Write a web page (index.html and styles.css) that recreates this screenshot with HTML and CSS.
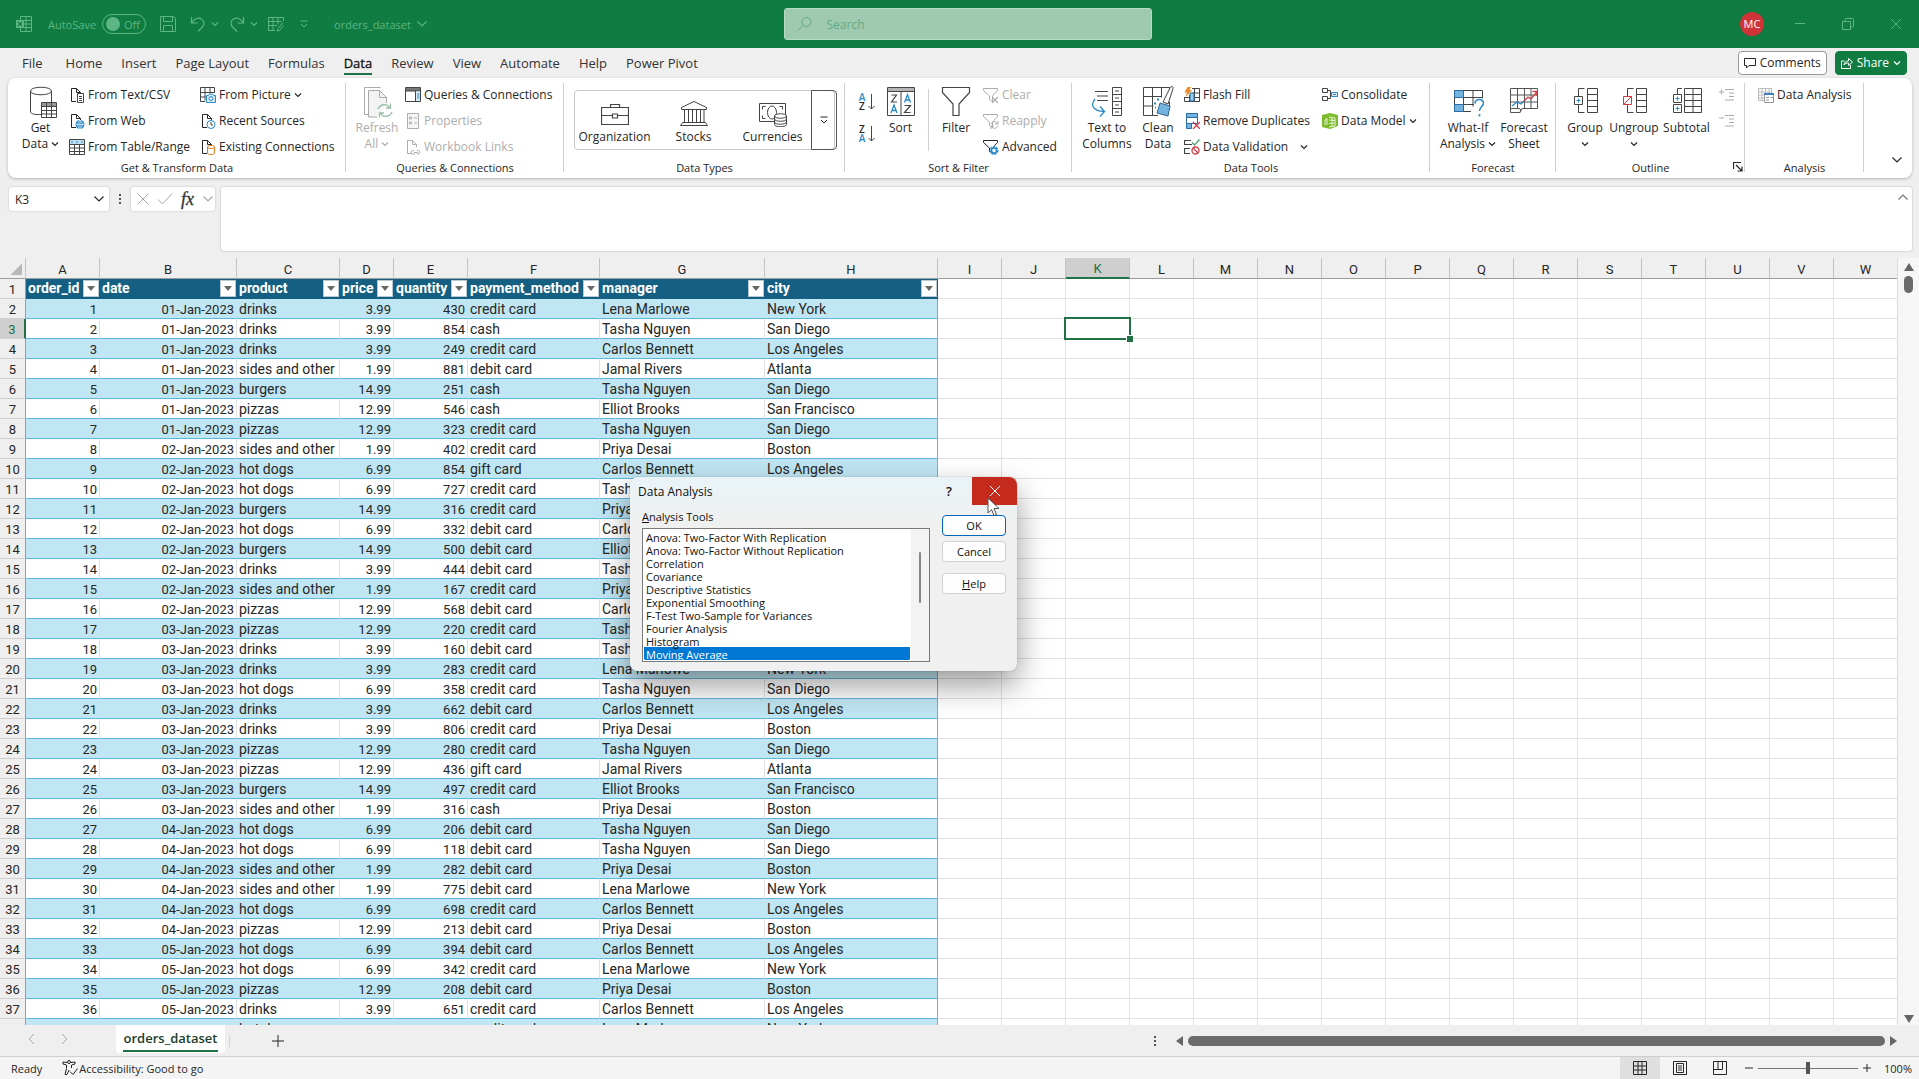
FILE: index.html
```html
<!DOCTYPE html>
<html lang="en">
<head>
    <meta charset="UTF-8">
    <meta name="viewport" content="width=device-width, initial-scale=1.0">
    <title>orders_dataset - Excel</title>
    <link rel="stylesheet" href="styles.css">
</head>
<body>
    <!-- shared icons -->
    <svg class="sprite" aria-hidden="true">
        <symbol id="chev" viewBox="0 0 8 8"><path d="M1 2.5l3 3 3-3" fill="none" stroke="currentColor" stroke-width="1.2"/></symbol>
        <symbol id="chev-lg" viewBox="0 0 12 12"><path d="M1.5 3.5L6 8l4.500-4.500" fill="none" stroke="currentColor" stroke-width="1.200"/></symbol>
        <symbol id="doc" viewBox="0 0 16 16"><path d="M7 14.500H2.500v-13h5l4 4V8M7.500 1.500v4h4" fill="none" stroke="currentColor"/></symbol>
        <symbol id="more" viewBox="0 0 10 10"><path d="M1.500 2h7" fill="none" stroke="currentColor"/><path d="M2 5l3 3 3-3" fill="none" stroke="currentColor"/></symbol>
        <symbol id="funnel" viewBox="0 0 16 16"><path d="M.5 1.500h14v2L9.500 9v5.500l-3-2V9L.5 3.500z" fill="none" stroke="currentColor"/></symbol>
    </svg>

    <header class="titlebar">
        <div class="quick">
            <svg class="i16" viewBox="0 0 16 16"><g fill="none" stroke="currentColor"><path d="M4.500 4V.5h11v15h-11V12M10 .5v15M4.500 4.500h11M8 8h7.500M8 11.500h7.500"/></g><path d="M0 4h8v8H0z" fill="currentColor"/><path d="M2 6l4 4M6 6l-4 4" stroke="#107c41" stroke-width="1.200"/></svg>
            <label class="autosave">AutoSave <span class="switch"><input type="checkbox"><i></i>Off</span></label>
            <button class="tb save" aria-label="Save"><svg class="i16" viewBox="0 0 16 16"><path d="M.5.5h13l2 2v13H.5zM3.500.5v5h9v-5M3.500 15.500v-6h9v6" fill="none" stroke="currentColor"/></svg></button>
            <button class="tb undo" aria-label="Undo"><svg class="i16" viewBox="0 0 16 16"><path d="M1.500 1v6h6M1.500 7C4 3 8 1 11.500 3s3 6.500.5 8.500L8 15.500" fill="none" stroke="currentColor" stroke-width="1.200"/></svg><svg class="i8"><use href="#chev"/></svg></button>
            <button class="tb redo" aria-label="Redo"><svg class="i16" viewBox="0 0 16 16"><path d="M14.500 1v6h-6M14.500 7C12 3 8 1 4.500 3S1.500 9.500 4 11.500l4 4" fill="none" stroke="currentColor" stroke-width="1.200"/></svg><svg class="i8"><use href="#chev"/></svg></button>
            <button class="tb form" aria-label="Form"><svg class="i16" viewBox="0 0 16 16"><path d="M7 14.500H.5V1.500h15V5M.5 5.500h13M.5 9.500H9M5 1.500v13M10 1.500v7M15 6.500l-5 6-1 2.500 2.500-.5 4-5" fill="none" stroke="currentColor"/></svg></button>
            <button class="tb custom" aria-label="Customize Quick Access Toolbar"><svg class="i10"><use href="#more"/></svg></button>
            <button class="tb doc-name">orders_dataset <svg class="i12"><use href="#chev-lg"/></svg></button>
        </div>
        <label class="search">
            <svg class="i16" viewBox="0 0 16 16"><circle cx="9.500" cy="6" r="4.500" fill="none" stroke="currentColor"/><path d="M6 9.500L1 14.500" stroke="currentColor"/></svg>
            <input type="search" placeholder="Search" aria-label="Search">
        </label>
        <div class="window-btns">
            <span class="avatar">MC</span>
            <button class="tb" aria-label="Minimize"><svg class="i12" viewBox="0 0 12 12"><path d="M1 5.500h10" stroke="currentColor"/></svg></button>
            <button class="tb" aria-label="Restore"><svg class="i12" viewBox="0 0 12 12"><path d="M.5 3.500h8v8h-8zM3 3V1.500Q3 .5 4 .5h6.500q1 0 1 1V8q0 1-1 1H9" fill="none" stroke="currentColor"/></svg></button>
            <button class="tb" aria-label="Close"><svg class="i12" viewBox="0 0 12 12"><path d="M1 1l10 10M11 1L1 11" stroke="currentColor"/></svg></button>
        </div>
    </header>

    <nav class="tabs">
        <a href="#" class="file">File</a>
        <a href="#">Home</a>
        <a href="#">Insert</a>
        <a href="#">Page Layout</a>
        <a href="#">Formulas</a>
        <a href="#" class="active">Data</a>
        <a href="#">Review</a>
        <a href="#">View</a>
        <a href="#">Automate</a>
        <a href="#">Help</a>
        <a href="#">Power Pivot</a>
        <div class="tab-actions">
            <button class="comments"><svg class="i12" viewBox="0 0 12 12"><path d="M.5 1.500h11v7H5l-2.500 2.500V8.500h-2z" fill="none" stroke="currentColor"/></svg>Comments</button>
            <button class="share"><svg class="i12" viewBox="0 0 12 12"><path d="M3.500 4H.5v7.500h9V8M3 8c.5-3 2-4 4.500-4V1.500L11.500 5 7.500 8.500V6C5.500 6 4 6.500 3 8z" fill="none" stroke="currentColor"/></svg>Share<svg class="i8"><use href="#chev"/></svg></button>
        </div>
    </nav>

    <section class="ribbon">
        <div class="group">
            <div class="body body-transform">
                <button class="big"><svg class="i32" viewBox="0 0 32 32"><path d="M16 28.500C8 29 5.500 27 5.500 26V5C5.500 0 26.500 0 26.500 5v11M5.500 5c0 5 21 5 21 0" fill="none" stroke="#444"/><path d="M16.500 16.500h15v15h-15z" fill="#fff" stroke="#444"/><path d="M17 17h14v3H17z" fill="#999"/><path d="M16.500 20.500h15M16.500 24.500h15M16.500 28h15M21.500 17v14.500M26.500 17v14.500" stroke="#444"/></svg><span>Get</span><span>Data <svg class="i8"><use href="#chev"/></svg></span></button>
                <div class="col">
                    <button class="small"><svg class="i16" viewBox="0 0 16 16"><use href="#doc"/><path d="M8.500 6.500h6v9h-6z" fill="#fff" stroke="#444"/><path d="M10 9.500h3M10 11.500h3M10 13.500h3" stroke="#444"/></svg>From Text/CSV</button>
                    <button class="small"><svg class="i16" viewBox="0 0 16 16"><use href="#doc"/><circle cx="11" cy="11.500" r="4.500" fill="#2b8ac6"/><path d="M6.500 11.500h9M11 7v9M11 7c-3 3-3 6 0 9M11 7c3 3 3 6 0 9" fill="none" stroke="#fff" stroke-width=".6"/></svg>From Web</button>
                    <button class="small"><svg class="i16" viewBox="0 0 16 16"><path d="M1 1h14v4H1z" fill="#bfe0f3"/><path d="M.5.5h15v15H.5zM.5 5.500h15M.5 9h15M.5 12.500h15M5.500 5v10.500M10.500 5v10.500" fill="none" stroke="#444"/><path d="M2 3h2M7 3h2M12 3h2" stroke="#2b8ac6"/></svg>From Table/Range</button>
                </div>
                <div class="col">
                    <button class="small"><svg class="i16" viewBox="0 0 16 16"><path d="M5 14.500H.5V.5h14V6M.5 5.500h14M.5 10h5M5 .5v13M10 .5v6" fill="none" stroke="#444"/><path d="M6.500 8.500h2l1-1.500h3l1 1.500h2v7h-9z" fill="#d8ecf8" stroke="#2b8ac6"/><circle cx="11" cy="11.500" r="2" fill="none" stroke="#2b8ac6"/></svg>From Picture <svg class="i8"><use href="#chev"/></svg></button>
                    <button class="small"><svg class="i16" viewBox="0 0 16 16"><use href="#doc"/><circle cx="11" cy="11.500" r="4" fill="#fff" stroke="#2b8ac6"/><path d="M11 9v3h2" fill="none" stroke="#444"/></svg>Recent Sources</button>
                    <button class="small"><svg class="i16" viewBox="0 0 16 16"><use href="#doc"/><path d="M7.500 8v6c0 2 7 2 7 0V8c0-2-7-2-7 0zm0 0c0 2 7 2 7 0" fill="#fff" stroke="#e07b1a"/></svg>Existing Connections</button>
                </div>
            </div>
            <h2>Get &amp; Transform Data</h2>
        </div>

        <div class="group">
            <div class="body body-queries">
                <button class="big" disabled><svg class="i32" viewBox="0 0 32 32"><path d="M8 28.500H3.500v-27h16" fill="none" stroke="#aaa"/><path d="M16 31H7.500V4.500h11l7 7V17" fill="#f3f3f3" stroke="#aaa"/><path d="M18.500 4.500v7h7" fill="none" stroke="#aaa"/><path d="M17 23c2-5 9-6 12-1M29.500 17.500V22H25M31 26c-2 5-9 6-12 1M18.500 31.500V27H23" fill="none" stroke="#9bbfa9" stroke-width="1.300"/></svg><span>Refresh</span><span>All <svg class="i8"><use href="#chev"/></svg></span></button>
                <div class="col">
                    <button class="small"><svg class="i16" viewBox="0 0 16 16"><path d="M1 1h14v3H1z" fill="#777"/><path d="M.5.5h15v14H.5zM.5 4h15M10.500 4v10.500" fill="none" stroke="#444"/><path d="M11 4.500h4V14h-4z" fill="#d8ecf8"/><path d="M12 7h2.500M12 9h2.500M12 11h2.500" stroke="#2b8ac6"/></svg>Queries &amp; Connections</button>
                    <button class="small" disabled><svg class="i16" viewBox="0 0 16 16"><path d="M2.500.5h11v15h-11z" fill="#f6f6f6" stroke="currentColor"/><path d="M4.500 4h2v2h-2zM4.500 9h2v2h-2zM9 5h3M9 10h3" fill="none" stroke="currentColor"/></svg>Properties</button>
                    <button class="small" disabled><svg class="i16" viewBox="0 0 16 16"><use href="#doc"/><path d="M9 11.500H7.500a1.800 1.800 0 0 0 0 3.500H10M12 11.500h1.500a1.800 1.800 0 0 1 0 3.500H12M9 13.500h4" fill="none" stroke="currentColor"/></svg>Workbook Links</button>
                </div>
            </div>
            <h2>Queries &amp; Connections</h2>
        </div>

        <div class="group">
            <div class="body">
                <div class="gallery">
                    <button><svg class="i28" viewBox="0 0 28 28"><path d="M.5 8.500h27v17H.5zM.5 16.500h11M16.500 16.500h11M9.500 8V5.500h9V8M11.500 15h5v4h-5z" fill="none" stroke="#444" stroke-width="1.200"/></svg>Organization</button>
                    <button><svg class="i28" viewBox="0 0 28 28"><path d="M1.500 10.500v-2L14 2.500l12.500 6v2zM4.500 11v12M8.500 11v12M12.500 11v12M16.500 11v12M20.500 11v12M24 11v12M3 23.500h22M.5 26.500h27l-2-3h-23z" fill="none" stroke="#444"/></svg>Stocks</button>
                    <button><svg class="i28" viewBox="0 0 28 28"><path d="M.5 4.500h26v18H.5z" fill="none" stroke="#444"/><path d="M3.500 7.500h3M3.500 7.500v3M23.500 7.500h-3M23.500 7.500v3M3.500 19.500h3M3.500 19.500v-3" stroke="#444"/><ellipse cx="13" cy="13.500" rx="4.500" ry="6.500" fill="none" stroke="#444"/><path d="M15.500 17v8.500c0 3 12 3 12 0V17c0-3-12-3-12 0z" fill="#fff" stroke="#444"/><path d="M15.500 17c0 3 12 3 12 0M15.500 20c0 3 12 3 12 0M15.500 23c0 3 12 3 12 0" fill="none" stroke="#444"/></svg>Currencies</button>
                    <button class="gallery-more" aria-label="More data types"><svg class="i10"><use href="#more"/></svg></button>
                </div>
            </div>
            <h2>Data Types</h2>
        </div>

        <div class="group">
            <div class="body body-sort">
                <div class="sorts">
                    <button aria-label="Sort A to Z"><span><b>A</b>Z</span><svg viewBox="0 0 7 18"><path d="M3.500 1v15M.5 13l3 3 3-3" fill="none" stroke="#444"/></svg></button>
                    <button aria-label="Sort Z to A"><span>Z<b>A</b></span><svg viewBox="0 0 7 18"><path d="M3.500 1v15M.5 13l3 3 3-3" fill="none" stroke="#444"/></svg></button>
                </div>
                <button class="big sort-btn"><svg class="i32" viewBox="0 0 32 32"><path d="M3 1.500h27v4H3z" fill="#b5b5b5"/><path d="M2.500 1.500h27v28h-27zM2.500 5.500h27M16 5.500v24" fill="none" stroke="#444"/><path d="M6.500 9h5L6.500 16h5.500M19.500 19.500h6l-6 7h6" fill="none" stroke="#444" stroke-width="1.200"/><path d="M6 27l3-8 3 8M7 24.500h4M19.500 16.500l3-8 3 8M20.500 14h4" fill="none" stroke="#2b8ac6" stroke-width="1.300"/></svg><span>Sort</span></button>
                <button class="big"><svg class="i32" viewBox="0 0 32 32"><path d="M2.500 1.500h27v5L19 18v11.500h-6V18L2.500 6.500z" fill="none" stroke="#444" stroke-width="1.200"/></svg><span>Filter</span></button>
                <div class="col">
                    <button class="small" disabled><svg class="i16"><use href="#funnel"/><path d="M9 10l6 6M15 10l-6 6" stroke="currentColor" stroke-width="1.200"/></svg>Clear</button>
                    <button class="small" disabled><svg class="i16"><use href="#funnel"/><path d="M8 11c2-3 5-3 6.500-.5M15 8v3h-3M15 13c-2 3-5 3-6.500.5M8 16v-3h3" fill="none" stroke="currentColor"/></svg>Reapply</button>
                    <button class="small"><svg class="i16"><use href="#funnel"/><circle cx="11" cy="11.500" r="3.500" fill="#fff" stroke="#2b8ac6" stroke-width="2" stroke-dasharray="2 1"/><circle cx="11" cy="11.500" r="2.500" fill="#fff" stroke="#2b8ac6" stroke-width="1.500"/></svg>Advanced</button>
                </div>
            </div>
            <h2>Sort &amp; Filter</h2>
        </div>

        <div class="group">
            <div class="body body-tools">
                <button class="big"><svg class="i32" viewBox="0 0 32 32"><path d="M4 5.500h13M6 10h11M6 14.500h11M21.500 1.500h9v28h-9zM21.500 8.500h9M21.500 15.500h9M21.500 22.500h9M24 5h4M24 12h4M24 19h4M24 26h4" fill="none" stroke="#444"/><path d="M4 13c-5 6-2 12 9 12.500M9 20.500l4.500 5L9 30.500" fill="none" stroke="#2b8ac6" stroke-width="1.300"/></svg><span>Text to</span><span>Columns</span></button>
                <button class="big"><svg class="i32" viewBox="0 0 32 32"><path d="M16 29.500H1.500v-28h26v4M1.500 10.500h18M1.500 20h10M10.500 1.500v28M19.500 1.500v10M27.500 16v5" fill="none" stroke="#444"/><path d="M28.500 1c2-1 3 0 2.500 1.500L26 18l-5-2z" fill="#fff" stroke="#444"/><path d="M18 17l10 3-2 10-11-3z" fill="#74b3e0" stroke="#33658e"/><path d="M12 17.500h2M15 13.500h2M13 21.500h1" stroke="#2b8ac6" stroke-width="2"/></svg><span>Clean</span><span>Data</span></button>
                <div class="col">
                    <button class="small"><svg class="i16" viewBox="0 0 16 16"><path d="M8 1.500h7.500v13H.5V10M.5 10.500h15M8 6h7.500M5.500 8v6.500M10.500 1.500v13" fill="none" stroke="#444"/><path d="M6 6h4v8H6z" fill="#9ccbea" stroke="#2b6ca3"/><path d="M3.500 0H7L5.500 3H8L1.500 10 3 5.500H.5z" fill="#f08a24"/></svg>Flash Fill</button>
                    <button class="small"><svg class="i16" viewBox="0 0 16 16"><path d="M2.500.5h11v4h-11zM2.500 10.500h5v5h-5z" fill="#74b3e0" stroke="#2b6ca3"/><path d="M2.500 4.500h11v6h-11z" fill="#fff" stroke="#2b6ca3"/><path d="M9 9l7 7M16 9l-7 7" stroke="#d13b45" stroke-width="1.300"/></svg>Remove Duplicates</button>
                    <button class="small"><svg class="i16" viewBox="0 0 16 16"><path d="M7 1.500H.5v4H8M6 9.500H.5v5H6" fill="none" stroke="#444" stroke-width="1.200"/><path d="M8 3.500l2.500 2.500L15.500.5" fill="none" stroke="#3c9a62" stroke-width="1.200"/><circle cx="11.500" cy="11.500" r="3.500" fill="#fff" stroke="#d13b45" stroke-width="1.300"/><path d="M9 9l5 5" stroke="#d13b45" stroke-width="1.300"/></svg>Data Validation <svg class="i8 far"><use href="#chev"/></svg></button>
                </div>
                <div class="col">
                    <button class="small"><svg class="i16" viewBox="0 0 16 16"><path d="M.5 1.500h5v4h-5zM.5 9.500h5v4h-5zM5.500 3.500h3v8h-3" fill="none" stroke="#444"/><path d="M9.500 5.500h6v4h-6z" fill="#d8ecf8" stroke="#2b8ac6"/><path d="M11 7.500h3" stroke="#2b8ac6"/></svg>Consolidate</button>
                    <button class="small"><svg class="i16" viewBox="0 0 16 16"><path d="M0 2l8-2 8 2v11l-8 3-8-2z" fill="#7cbb2e"/><path d="M3 12V7l2-1.500V12M7 4l6 1v8l-6 1M7 7l6 .5M7 10.500l6-.5M10 5v8.500" fill="none" stroke="#e4f3cf"/></svg>Data Model <svg class="i8"><use href="#chev"/></svg></button>
                </div>
            </div>
            <h2>Data Tools</h2>
        </div>

        <div class="group">
            <div class="body body-forecast">
                <button class="big"><svg class="i32" viewBox="0 0 32 32"><path d="M2.500 4.500h9v7h-9zM2.500 18.500h9v7h-9z" fill="#74b3e0"/><path d="M19 25.500H2.500v-21h28v8M2.500 11.500h28M2.500 18.500H22M11.500 4.500v21M21 4.500v16" fill="none" stroke="#444"/><path d="M2.500 4.500h9v7h-9zM2.500 18.500h9v7h-9z" fill="none" stroke="#2b6ca3"/><path d="M23 17.500c0-5.500 9-5 8.500 0-.5 3-4 3.500-4 7.500M27.500 28v2.500" fill="none" stroke="#2b8ac6" stroke-width="1.600"/></svg><span>What-If</span><span>Analysis <svg class="i8"><use href="#chev"/></svg></span></button>
                <button class="big"><svg class="i32" viewBox="0 0 32 32"><path d="M2.500 2.500h27v20H14l-2 4H2.500zM2.500 9h27M2.500 16h27M9.500 2.500v20M16.500 2.500v20M23 2.500v20M12 26.500c1-2 1-4-1-4H2.500" fill="none" stroke="#555"/><path d="M4 20l5-4 4 2 4-4" fill="none" stroke="#2b8ac6" stroke-width="1.300"/><path d="M16 15l4-4 3 2 6-7M24.500 5.500h4.500V10" fill="none" stroke="#d13b45" stroke-width="1.300"/></svg><span>Forecast</span><span>Sheet</span></button>
            </div>
            <h2>Forecast</h2>
        </div>

        <div class="group">
            <div class="body body-outline">
                <button class="big"><svg class="i32" viewBox="0 0 32 32"><path d="M18.500 2.500h10v24h-10zM18.500 8.500h10M18.500 14.500h10M18.500 20.500h10M15.500 2.500h-6V10M9.500 19v7.500h6M5.500 10.500h8v8h-8z" fill="none" stroke="#444"/><path d="M7.500 14.500h4M9.500 12.500v4" stroke="#2b8ac6"/></svg><span>Group</span><span><svg class="i8"><use href="#chev"/></svg></span></button>
                <button class="big"><svg class="i32" viewBox="0 0 32 32"><path d="M18.500 2.500h10v24h-10zM18.500 8.500h10M18.500 14.500h10M18.500 20.500h10M15.500 2.500h-6V10M9.500 19v7.500h6" fill="none" stroke="#444"/><path d="M5.500 10.500h8v8h-8zM5.500 18.500l8-8" fill="none" stroke="#d13b45"/></svg><span>Ungroup</span><span><svg class="i8"><use href="#chev"/></svg></span></button>
                <button class="big"><svg class="i32" viewBox="0 0 32 32"><path d="M13.500 2.500h17v24h-17zM13.500 8.500h17M13.500 14.500h17M13.500 20.500h17M22 2.500v24M11 2.500H6.500V8M2.500 8.500h8v8h-8zM2.500 18.500h8v8h-8z" fill="none" stroke="#444"/><path d="M4.500 12.500h4M6.500 10.500v4M4.500 22.500h4M6.500 20.500v4" stroke="#2b8ac6"/></svg><span>Subtotal</span></button>
                <div class="col details">
                    <button class="small" disabled aria-label="Show Detail"><svg class="i16" viewBox="0 0 16 16"><path d="M0 5h5M2.500 2.500v5M6 2.500h9M10 6h5M10 9.500h5M6 13h9" stroke="currentColor"/></svg></button>
                    <button class="small" disabled aria-label="Hide Detail"><svg class="i16" viewBox="0 0 16 16"><path d="M0 5h5M6 2.500h9M10 6h5M10 9.500h5M6 13h9" stroke="currentColor"/></svg></button>
                </div>
            </div>
            <h2>Outline</h2>
            <button class="launcher" aria-label="Outline settings"><svg class="i10" viewBox="0 0 10 10"><path d="M.5 7V.5H8M3 3l6 6M9 4.500V9H4.500" fill="none" stroke="currentColor" stroke-width="1.200"/></svg></button>
        </div>

        <div class="group">
            <div class="body body-analysis">
                <button class="small"><svg class="i16" viewBox="0 0 16 16"><path d="M.5 1.500h13v12H.5zM.5 5h13M.5 8h13M.5 11h13M4 1.500v12M7.500 1.500v12M11 1.500v12" fill="none" stroke="#bbb"/><path d="M6.500 6.500h9v9h-9z" fill="#fff" stroke="#999"/><path d="M6 7h10" stroke="#3d7ebd" stroke-width="2"/><path d="M8 10.500h3M12.500 10.500H15M8 13h3" stroke="#999"/></svg>Data Analysis</button>
            </div>
            <h2>Analysis</h2>
        </div>
        <button class="collapse" aria-label="Collapse the ribbon"><svg class="i12"><use href="#chev-lg"/></svg></button>
    </section>

    <div class="formula-bar">
        <label class="name-box"><input type="text" value="K3" aria-label="Name Box"><svg class="i12"><use href="#chev-lg"/></svg></label>
        <svg class="dots" viewBox="0 0 2 10"><path d="M0 0h2v2H0zM0 4h2v2H0zM0 8h2v2H0z" fill="#555"/></svg>
        <div class="fx-box">
            <button class="off" aria-label="Cancel"><svg class="i12" viewBox="0 0 12 12"><path d="M.5.5l11 11M11.500.5l-11 11" stroke="currentColor"/></svg></button>
            <button class="off" aria-label="Enter"><svg class="i16" viewBox="0 0 16 12"><path d="M1 6.500L5.500 11 15 .5" fill="none" stroke="currentColor"/></svg></button>
            <button class="fx" aria-label="Insert Function">fx</button>
            <button class="off" aria-label="Functions"><svg class="i12"><use href="#chev-lg"/></svg></button>
        </div>
        <div class="formula">
            <textarea aria-label="Formula Bar"></textarea>
            <svg class="i12 up" viewBox="0 0 12 12"><path d="M1.500 8.500L6 4l4.500 4.500" fill="none" stroke="currentColor" stroke-width="1.200"/></svg>
        </div>
    </div>

    <main class="sheet-area">
        <div class="sheet">
            <table id="grid">
                <colgroup id="gridCols"></colgroup>
                <thead><tr id="gridHead"></tr></thead>
                <tbody id="gridBody"></tbody>
            </table>
        </div>
        <div class="vscroll">
            <svg class="i10" viewBox="0 0 10 10"><path d="M5 1l5 8H0z" fill="#666"/></svg>
            <div class="vthumb"></div>
            <svg class="i10 down" viewBox="0 0 10 10"><path d="M5 9l5-8H0z" fill="#666"/></svg>
        </div>
    </main>

    <div class="sheet-tabs">
        <div class="sheet-nav">
            <button aria-label="Previous sheet"><svg class="i12" viewBox="0 0 12 12"><path d="M8 1L3 6l5 5" fill="none" stroke="currentColor"/></svg></button>
            <button aria-label="Next sheet"><svg class="i12" viewBox="0 0 12 12"><path d="M4 1l5 5-5 5" fill="none" stroke="currentColor"/></svg></button>
        </div>
        <button class="sheet-tab"><span>orders_dataset</span></button>
        <button class="add" aria-label="New sheet"><svg class="i12" viewBox="0 0 12 12"><path d="M6 0v12M0 6h12" stroke="currentColor"/></svg></button>
        <svg class="dots" viewBox="0 0 2 10"><path d="M0 0h2v2H0zM0 4h2v2H0zM0 8h2v2H0z" fill="#555"/></svg>
        <div class="hscroll">
            <svg viewBox="0 0 7 10"><path d="M7 0v10L0 5z" fill="#666"/></svg>
            <div class="hthumb"></div>
            <svg viewBox="0 0 7 10"><path d="M0 0v10l7-5z" fill="#666"/></svg>
        </div>
    </div>

    <footer class="status">
        <span class="ready">Ready</span>
        <button class="access"><svg class="i16" viewBox="0 0 16 16"><circle cx="7" cy="2" r="1.500" fill="none" stroke="currentColor"/><path d="M5 2.500L1 2v2l3.500 1v3.500L3 14.500h2L7 10M9 2.500L13 2v2L9.500 5v3M8 11.500l3 3 4.500-6" fill="none" stroke="currentColor"/></svg>Accessibility: Good to go</button>
        <div class="views">
            <button class="on" aria-label="Normal"><svg class="i14" viewBox="0 0 14 14"><path d="M.5.5h13v13H.5zM.5 5h13M.5 9h13M5 .5v13M9 .5v13" fill="none" stroke="currentColor"/></svg></button>
            <button aria-label="Page Layout view"><svg class="i14" viewBox="0 0 14 14"><path d="M.5.5h13v13H.5zM3.500 2.500h7v9h-7zM5 5h4M5 7h4M5 9h4" fill="none" stroke="currentColor"/></svg></button>
            <button aria-label="Page Break Preview"><svg class="i14" viewBox="0 0 14 14"><path d="M.5.5h13v13H.5zM.5 8.500h9v-8M5 .5v8" fill="none" stroke="currentColor"/></svg></button>
        </div>
        <div class="zoom">
            <button aria-label="Zoom out"><svg class="i10" viewBox="0 0 10 10"><path d="M1 5h8" stroke="currentColor"/></svg></button>
            <input type="range" min="0" max="200" value="100" aria-label="Zoom">
            <button aria-label="Zoom in"><svg class="i10" viewBox="0 0 10 10"><path d="M1 5h8M5 1v8" stroke="currentColor"/></svg></button>
            <span>100%</span>
        </div>
    </footer>

    <div class="dialog" role="dialog" aria-labelledby="dlgTitle">
        <div class="dialog-title">
            <h1 id="dlgTitle">Data Analysis</h1>
            <button class="what" aria-label="Help">?</button>
            <button class="close" aria-label="Close"><svg class="i12" viewBox="0 0 12 12"><path d="M1 1l10 10M11 1L1 11" stroke="currentColor"/></svg></button>
        </div>
        <div class="dialog-body">
            <div class="tools">
                <label for="tools"><u>A</u>nalysis Tools</label>
                <div class="listbox">
                    <select id="tools" size="10">
                        <option>Anova: Two-Factor With Replication</option>
                        <option>Anova: Two-Factor Without Replication</option>
                        <option>Correlation</option>
                        <option>Covariance</option>
                        <option>Descriptive Statistics</option>
                        <option>Exponential Smoothing</option>
                        <option>F-Test Two-Sample for Variances</option>
                        <option>Fourier Analysis</option>
                        <option>Histogram</option>
                        <option selected>Moving Average</option>
                    </select>
                    <div class="list-scroll"><i></i></div>
                </div>
            </div>
            <div class="dialog-btns">
                <button class="ok">OK</button>
                <button>Cancel</button>
                <button class="help"><u>H</u>elp</button>
            </div>
        </div>
        <svg class="cursor" viewBox="0 0 13 20"><path d="M1 1v15l3.500-3.500 2.500 6 2.500-1-2.500-6h5z" fill="#fff" stroke="#555"/></svg>
    </div>

    <script src="script.js"></script>
</body>
</html>
```

FILE: styles.css
```css
* {
    box-sizing: border-box;
}
body {
    margin: 0;
    height: 100vh;
    display: flex;
    flex-direction: column;
    overflow: hidden;
    background: #efefef;
    color: #262626;
    font-family: "Open Sans", "Segoe UI", sans-serif;
    font-size: 12px;
}
button {
    font: inherit;
    color: inherit;
    background: none;
    border: 0;
    padding: 0;
    white-space: nowrap;
}
h1, h2 {
    margin: 0;
    font-weight: 400;
}
svg {
    flex: none;
}
.sprite {
    position: absolute;
    width: 0;
    height: 0;
}
.i8 { width: 8px; height: 8px; }
.i10 { width: 10px; height: 10px; }
.i12 { width: 12px; height: 12px; }
.i14 { width: 14px; height: 14px; }
.i16 { width: 16px; height: 16px; }
.i28 { width: 28px; height: 28px; }
.i32 { width: 32px; height: 32px; }

/* title bar */
.titlebar {
    flex: none;
    height: 48px;
    display: grid;
    grid-template-columns: 1fr 368px 1fr;
    align-items: center;
    padding-left: 16px;
    background: #107c41;
    color: #5cb583;
    font-size: 11px;
}
.quick {
    display: flex;
    align-items: center;
}
.tb {
    display: flex;
    align-items: center;
    gap: 5px;
}
.autosave {
    display: flex;
    align-items: center;
    gap: 6px;
    margin-left: 16px;
}
.switch {
    display: flex;
    align-items: center;
    gap: 4px;
    width: 44px;
    height: 20px;
    padding-left: 3px;
    border: 1px solid #5cb583;
    border-radius: 10px;
}
.switch input {
    position: absolute;
    opacity: 0;
}
.switch i {
    width: 14px;
    height: 14px;
    border-radius: 50%;
    background: #5cb583;
}
.save, .undo { margin-left: 14px; }
.redo, .form { margin-left: 10px; }
.custom { margin-left: 15px; }
.doc-name { margin-left: 25px; }
.search {
    display: flex;
    align-items: center;
    gap: 14px;
    height: 32px;
    padding: 0 12px;
    background: #9fcab1;
    border: 1px solid #b7d9c5;
    border-radius: 3px;
    color: #63aa82;
    font-size: 12px;
}
.search input {
    flex: 1;
    border: 0;
    background: none;
    padding: 0;
    font: inherit;
}
.search input::placeholder {
    color: #63aa82;
}
.window-btns {
    display: flex;
    align-items: center;
    justify-content: flex-end;
    gap: 36px;
    padding-right: 17px;
}
.avatar {
    width: 24px;
    height: 24px;
    margin-right: -6px;
    border-radius: 50%;
    background: #d13438;
    color: #fff;
    line-height: 24px;
    text-align: center;
}

/* ribbon tabs */
.tabs {
    flex: none;
    display: flex;
    gap: 19px;
    height: 30px;
    padding: 0 12px 0 22px;
    font-size: 13px;
    line-height: 24px;
}
.tabs a {
    height: 27px;
    padding-top: 3px;
    color: #333;
    text-decoration: none;
}
.tabs .file {
    margin-right: 4px;
}
.tabs .active {
    border-bottom: 2px solid #1e7145;
    color: #111;
    -webkit-text-stroke: 0.3px;
}
.tab-actions {
    display: flex;
    gap: 8px;
    margin-left: auto;
    padding: 3px 0;
}
.tab-actions button {
    display: flex;
    align-items: center;
    gap: 4px;
    height: 24px;
    padding: 0 5px;
    border: 1px solid #999;
    border-radius: 4px;
    background: #fff;
    font-size: 12px;
}
.tab-actions .share {
    border-color: #107c41;
    background: #107c41;
    color: #fff;
}

/* ribbon */
.ribbon {
    flex: none;
    height: 100px;
    margin: 0 7px 0 8px;
    display: grid;
    grid-template-columns: 338px 218px 281px 227px 358px 126px 189px 119px 1fr;
    background: #fff;
    border-radius: 8px;
    box-shadow: 0 1px 3px rgba(0, 0, 0, 0.25);
}
.group {
    position: relative;
    padding-top: 5px;
    background: linear-gradient(#cfcfcf, #cfcfcf) right 5px / 1px 89px no-repeat;
}
.group h2 {
    font-size: 11px;
    line-height: 14px;
    text-align: center;
}
.body {
    display: grid;
    height: 78px;
    align-items: start;
}
.body-transform { grid-template-columns: 57px 131px 1fr; padding-left: 4px; }
.body-queries { grid-template-columns: 56px 1fr; padding-left: 3px; }
.body-sort { grid-template-columns: 24px 51px 54px 1fr; padding-left: 9px; }
.body-tools { grid-template-columns: 50px 52px 138px 1fr; padding-left: 10px; }
.body-forecast { grid-template-columns: 56px 56px; padding-left: 10px; }
.body-outline { grid-template-columns: 48px 50px 55px 1fr; padding-left: 5px; }
.body-analysis { padding-left: 13px; }
.big {
    display: flex;
    flex-direction: column;
    align-items: center;
    padding-top: 3px;
    line-height: 16px;
}
.big .i32 {
    margin-bottom: 2px;
}
.col {
    display: flex;
    flex-direction: column;
    align-items: flex-start;
    gap: 2px;
}
.small {
    display: flex;
    align-items: center;
    gap: 3px;
    height: 24px;
    line-height: 16px;
}
.far {
    margin-left: 9px;
}
.ribbon button:disabled {
    color: #adadad;
}
.gallery {
    display: grid;
    grid-template-columns: 79px 79px 79px 24px;
    height: 60px;
    width: 261px;
    margin: 7px 0 0 10px;
    border: 1px solid #c8c8c8;
    border-radius: 4px;
}
.gallery button {
    display: flex;
    flex-direction: column;
    align-items: center;
    padding-top: 8px;
    line-height: 20px;
}
.gallery .gallery-more {
    justify-content: center;
    padding: 0;
    margin: -1px;
    border: 1px solid #555;
    border-radius: 0 4px 4px 0;
}
.sorts {
    display: grid;
    gap: 12px;
    padding: 9px 0 0 4px;
}
.sorts button {
    display: flex;
    align-items: center;
    gap: 2px;
    height: 20px;
    line-height: 9px;
    font-size: 10px;
    font-weight: 600;
}
.sorts span {
    display: flex;
    flex-direction: column;
    width: 8px;
}
.sorts b {
    font-weight: 600;
    color: #2b8ac6;
}
.sorts svg {
    width: 7px;
    height: 18px;
}
.sort-btn {
    margin-right: 6px;
    position: relative;
}
.sort-btn::after {
    content: "";
    position: absolute;
    top: 6px;
    right: -6px;
    width: 1px;
    height: 62px;
    background: #cfcfcf;
}
.details {
    padding-left: 5px;
}
.launcher {
    position: absolute;
    right: 2px;
    bottom: 5px;
    line-height: 10px;
}
.collapse {
    align-self: end;
    justify-self: end;
    padding: 0 9px 8px 0;
}

/* formula bar */
.formula-bar {
    flex: none;
    display: flex;
    align-items: flex-start;
    padding: 9px 7px 0 9px;
    height: 80px;
}
.name-box {
    display: flex;
    align-items: center;
    width: 100px;
    height: 24px;
    padding: 0 4px 0 6px;
    background: #fff;
    border-radius: 3px;
    box-shadow: 0 0 2px rgba(0, 0, 0, 0.25);
}
.name-box input {
    flex: 1;
    min-width: 0;
    padding: 0;
    border: 0;
    font: inherit;
    color: inherit;
}
.dots {
    width: 2px;
    height: 10px;
}
.formula-bar .dots {
    margin: 7px 10px 0;
}
.fx-box {
    display: flex;
    align-items: center;
    justify-content: space-between;
    width: 84px;
    height: 24px;
    padding: 0 1px 0 6px;
    background: #fff;
    border-radius: 3px;
    box-shadow: 0 0 2px rgba(0, 0, 0, 0.25);
}
.fx-box button {
    display: flex;
}
.fx-box .off {
    color: #a8a8a8;
}
.fx-box .fx {
    color: #333;
    font: italic 18px/20px "Liberation Serif", serif;
    -webkit-text-stroke: 0.3px;
}
.formula {
    flex: 1;
    position: relative;
    height: 64px;
    margin-left: 6px;
}
.formula textarea {
    display: block;
    width: 100%;
    height: 100%;
    border: 0;
    border-radius: 3px;
    resize: none;
    background: #fff;
    box-shadow: 0 0 2px rgba(0, 0, 0, 0.3);
}
.up {
    position: absolute;
    top: 4px;
    right: 3px;
    color: #777;
}

/* grid */
.sheet-area {
    flex: 1;
    min-height: 0;
    display: flex;
}
.sheet {
    flex: 1;
    overflow: hidden;
    background: linear-gradient(#efefef 21px, #fff 21px);
}
table {
    table-layout: fixed;
    width: 0;
    border-collapse: separate;
    border-spacing: 0;
    font-family: Roboto, "Liberation Sans", sans-serif;
    font-size: 14px;
    line-height: 17px;
}
th, td {
    height: 20px;
    padding: 2px 2px 0;
    border-right: 1px solid #e1e1e1;
    border-bottom: 1px solid #e1e1e1;
    text-align: left;
    font-weight: 400;
    white-space: nowrap;
}
td {
    background: #fff;
}
thead th {
    height: 21px;
    background: #efefef;
    border-right-color: #c4c4c4;
    border-bottom-color: #9c9c9c;
    font-size: 13px;
    text-align: center;
}
tbody th {
    padding: 2px 0 0;
    background: #efefef;
    border-right-color: #9c9c9c;
    border-bottom-color: #d0d0d0;
    font-size: 13px;
    text-align: center;
}
thead .corner {
    padding: 0;
    background: linear-gradient(135deg, transparent 50%, #b8b8b8 50%) 11px 6px / 11px 11px no-repeat #efefef;
}
thead .current {
    padding-top: 1px;
    background: #cfcfcf;
    border-bottom: 2px solid #217346;
    color: #217346;
}
tbody .current {
    background: #cfcfcf;
    border-right: 2px solid #217346;
    color: #217346;
}
.num {
    font-size: 13px;
    text-align: right;
}
.data td {
    border-bottom-color: #5fb6dc;
}
.band td {
    background: #c0e6f3;
    border-right-color: #c0e6f3;
}
.head td {
    padding: 0 2px;
    background: #156082;
    border-right-color: #156082;
    border-bottom-color: #156082;
    color: #fff;
    font-weight: 700;
}
.head div {
    display: flex;
    align-items: center;
    justify-content: space-between;
    height: 19px;
    margin-right: -2px;
}
.head button {
    flex: none;
    width: 16px;
    height: 17px;
    background: #fff;
    border: 1px solid #b9c9d2;
    line-height: 0;
}
.head button svg {
    width: 8px;
    height: 5px;
}
.data .last {
    border-right-color: #5fb6dc;
}
.data .blank, .head .blank {
    background: #fff;
    border-color: #e1e1e1;
}
.selected {
    position: relative;
}
.selected::before {
    content: "";
    position: absolute;
    inset: -2px;
    border: 2px solid #217346;
}
.selected::after {
    content: "";
    position: absolute;
    right: -4px;
    bottom: -4px;
    width: 6px;
    height: 6px;
    background: #217346;
    border: solid #fff;
    border-width: 1px 0 0 1px;
}
.vscroll {
    width: 22px;
    display: flex;
    flex-direction: column;
    align-items: center;
    gap: 4px;
    padding: 4px 0 1px;
    background: #f6f6f6;
    border-left: 1px solid #dcdcdc;
}
.vthumb {
    width: 9px;
    height: 17px;
    border-radius: 5px;
    background: #6b6b6b;
}
.vscroll .down {
    margin-top: auto;
}

/* sheet tabs */
.sheet-tabs {
    flex: none;
    display: flex;
    align-items: center;
    height: 32px;
    padding-right: 22px;
    border-bottom: 1px solid #cfcfcf;
}
.sheet-nav {
    display: flex;
    gap: 20px;
    width: 116px;
    padding-left: 26px;
    color: #aaa;
}
.sheet-tab {
    align-self: flex-start;
    width: 109px;
    height: 28px;
    background: #fff;
    border-radius: 0 0 4px 4px;
    color: #1c3d2b;
    font-size: 13px;
    font-weight: 600;
}
.sheet-tab span {
    display: block;
    margin: 0 7px;
    line-height: 24px;
    border-bottom: 2px solid #1e7145;
}
.add {
    display: flex;
    margin-left: 4px;
    padding-left: 42px;
    border-left: 1px solid #d4d4d4;
}
.sheet-tabs > .dots {
    margin-left: auto;
}
.hscroll {
    display: flex;
    align-items: center;
    gap: 5px;
    width: 38%;
    margin-left: 20px;
}
.hscroll svg {
    width: 7px;
    height: 10px;
}
.hthumb {
    flex: 1;
    height: 10px;
    border-radius: 5px;
    background: #6b6b6b;
}

/* status bar */
.status {
    flex: none;
    display: flex;
    height: 22px;
    align-items: center;
    padding: 0 7px 0 11px;
    background: #f4f4f4;
    font-size: 11px;
}
.access {
    display: flex;
    align-items: center;
    gap: 1px;
    margin-left: 20px;
}
.views {
    display: flex;
    align-self: stretch;
    margin-left: auto;
}
.views button {
    display: flex;
    align-items: center;
    justify-content: center;
    width: 40px;
}
.views .on {
    background: #dfdfdf;
}
.zoom {
    display: flex;
    align-items: center;
    gap: 4px;
    margin-left: 4px;
}
.zoom button {
    display: flex;
}
.zoom span {
    margin-left: 8px;
}
.zoom input {
    appearance: none;
    width: 100px;
    height: 12px;
    margin: 0;
    background: linear-gradient(#777, #777) center / 100% 1px no-repeat;
}
.zoom input::-webkit-slider-thumb {
    appearance: none;
    width: 4px;
    height: 12px;
    background: #555;
}

/* Data Analysis dialog */
.dialog {
    position: absolute;
    left: 630px;
    top: 477px;
    width: 387px;
    background: linear-gradient(#e9f4f8, #f0f0f0 48px);
    border-radius: 8px;
    box-shadow: 0 0 1px rgba(0, 0, 0, 0.5), 0 14px 32px rgba(0, 0, 0, 0.4);
    font-size: 11px;
    color: #111;
}
.dialog-title {
    display: flex;
    height: 28px;
    align-items: center;
    padding-left: 8px;
}
.dialog-title h1 {
    flex: 1;
    font-size: 12px;
}
.what {
    width: 46px;
    font-size: 13px;
    font-weight: 600;
}
.close {
    display: flex;
    align-items: center;
    justify-content: center;
    width: 45px;
    height: 28px;
    border-radius: 0 8px 0 0;
    background: #c42b1c;
    color: #fff;
}
.dialog-body {
    display: flex;
    gap: 12px;
    padding: 5px 11px 9px 12px;
}
.tools {
    flex: 1;
}
.tools label {
    display: block;
    height: 18px;
    line-height: 14px;
}
.listbox {
    display: flex;
    height: 134px;
    border: 1px solid #7a7a7a;
    background: #fff;
}
.listbox select {
    flex: 1;
    height: 130px;
    margin: 1px;
    padding: 0;
    border: 0;
    outline: 0;
    overflow: hidden;
    background: #fff;
    font: inherit;
    color: inherit;
}
.listbox option {
    height: 13px;
    min-height: 13px;
    padding: 0 2px;
    line-height: 12px;
}
.listbox option:checked {
    background: #0078d4 linear-gradient(#0078d4, #0078d4);
    color: #fff;
}
.list-scroll {
    width: 18px;
    padding: 23px 0 0 8px;
    background: #f3f3f3;
}
.list-scroll i {
    display: block;
    width: 2px;
    height: 51px;
    background: #858585;
    border-radius: 1px;
}
.dialog-btns {
    display: flex;
    flex-direction: column;
    gap: 5px;
    width: 64px;
    padding-top: 5px;
}
.dialog-btns button {
    height: 21px;
    background: #fdfdfd;
    border: 1px solid #d0d0d0;
    border-radius: 4px;
}
.dialog-btns .ok {
    border-color: #0067b8;
}
.dialog-btns .help {
    margin-top: 6px;
}
.cursor {
    position: absolute;
    left: 357px;
    top: 20px;
    width: 13px;
    height: 20px;
}
```

FILE: script.js
```javascript
const columns = [
    ['A', 74], ['B', 137], ['C', 103], ['D', 54], ['E', 74], ['F', 132], ['G', 165], ['H', 173]
];
'IJKLMNOPQRSTUVW'.split('').forEach(letter => columns.push([letter, 64]));

const fields = ['order_id', 'date', 'product', 'price', 'quantity', 'payment_method', 'manager', 'city'];

const prices = {
    'drinks': '3.99',
    'sides and other': '1.99',
    'burgers': '14.99',
    'pizzas': '12.99',
    'hot dogs': '6.99'
};

const cities = {
    'Lena Marlowe': 'New York',
    'Tasha Nguyen': 'San Diego',
    'Carlos Bennett': 'Los Angeles',
    'Jamal Rivers': 'Atlanta',
    'Elliot Brooks': 'San Francisco',
    'Priya Desai': 'Boston'
};

// day, product, quantity, payment method, manager
const orders = [
    [1, 'drinks', 430, 'credit card', 'Lena Marlowe'],
    [1, 'drinks', 854, 'cash', 'Tasha Nguyen'],
    [1, 'drinks', 249, 'credit card', 'Carlos Bennett'],
    [1, 'sides and other', 881, 'debit card', 'Jamal Rivers'],
    [1, 'burgers', 251, 'cash', 'Tasha Nguyen'],
    [1, 'pizzas', 546, 'cash', 'Elliot Brooks'],
    [1, 'pizzas', 323, 'credit card', 'Tasha Nguyen'],
    [2, 'sides and other', 402, 'credit card', 'Priya Desai'],
    [2, 'hot dogs', 854, 'gift card', 'Carlos Bennett'],
    [2, 'hot dogs', 727, 'credit card', 'Tasha Nguyen'],
    [2, 'burgers', 316, 'credit card', 'Priya Desai'],
    [2, 'hot dogs', 332, 'debit card', 'Carlos Bennett'],
    [2, 'burgers', 500, 'debit card', 'Elliot Brooks'],
    [2, 'drinks', 444, 'debit card', 'Tasha Nguyen'],
    [2, 'sides and other', 167, 'credit card', 'Priya Desai'],
    [2, 'pizzas', 568, 'debit card', 'Carlos Bennett'],
    [3, 'pizzas', 220, 'credit card', 'Tasha Nguyen'],
    [3, 'drinks', 160, 'debit card', 'Tasha Nguyen'],
    [3, 'drinks', 283, 'credit card', 'Lena Marlowe'],
    [3, 'hot dogs', 358, 'credit card', 'Tasha Nguyen'],
    [3, 'drinks', 662, 'debit card', 'Carlos Bennett'],
    [3, 'drinks', 806, 'credit card', 'Priya Desai'],
    [3, 'pizzas', 280, 'credit card', 'Tasha Nguyen'],
    [3, 'pizzas', 436, 'gift card', 'Jamal Rivers'],
    [3, 'burgers', 497, 'credit card', 'Elliot Brooks'],
    [3, 'sides and other', 316, 'cash', 'Priya Desai'],
    [4, 'hot dogs', 206, 'debit card', 'Tasha Nguyen'],
    [4, 'hot dogs', 118, 'debit card', 'Tasha Nguyen'],
    [4, 'sides and other', 282, 'debit card', 'Priya Desai'],
    [4, 'sides and other', 775, 'debit card', 'Lena Marlowe'],
    [4, 'hot dogs', 698, 'credit card', 'Carlos Bennett'],
    [4, 'pizzas', 213, 'debit card', 'Priya Desai'],
    [5, 'hot dogs', 394, 'debit card', 'Carlos Bennett'],
    [5, 'hot dogs', 342, 'credit card', 'Lena Marlowe'],
    [5, 'pizzas', 208, 'debit card', 'Priya Desai'],
    [5, 'drinks', 651, 'credit card', 'Carlos Bennett'],
    [5, 'hot dogs', 521, 'credit card', 'Lena Marlowe']
];

const active = { column: 'K', row: 3 };
const numeric = [0, 1, 3, 4];

function buildHeader() {
    const cols = document.getElementById('gridCols');
    const head = document.getElementById('gridHead');
    cols.innerHTML = '<col style="width:26px">';
    head.innerHTML = '<th class="corner"></th>';
    columns.forEach(([letter, width]) => {
        cols.innerHTML += `<col style="width:${width}px">`;
        head.innerHTML += `<th class="${letter === active.column ? 'current' : ''}">${letter}</th>`;
    });
}

function addRow(number, values, rowClass) {
    const row = document.getElementById('gridBody').insertRow();
    row.className = rowClass;
    row.innerHTML = `<th class="${number === active.row ? 'current' : ''}">${number}</th>`;
    columns.forEach(([letter], i) => {
        const cell = row.insertCell();
        if (i < values.length) {
            cell.innerHTML = values[i];
            if (number > 1 && numeric.includes(i)) cell.classList.add('num');
            if (i === values.length - 1) cell.classList.add('last');
        } else {
            cell.classList.add('blank');
        }
        if (letter === active.column && number === active.row) cell.classList.add('selected');
    });
}

buildHeader();

const arrow = '<svg viewBox="0 0 8 5"><path d="M0 0h8L4 5z" fill="#666"/></svg>';
addRow(1, fields.map(f => `<div>${f}<button aria-label="Filter ${f}">${arrow}</button></div>`), 'head');

orders.forEach(([day, product, quantity, payment, manager], i) => {
    const values = [i + 1, `0${day}-Jan-2023`, product, prices[product], quantity, payment, manager, cities[manager]];
    addRow(i + 2, values, i % 2 === 0 ? 'data band' : 'data');
});
```
